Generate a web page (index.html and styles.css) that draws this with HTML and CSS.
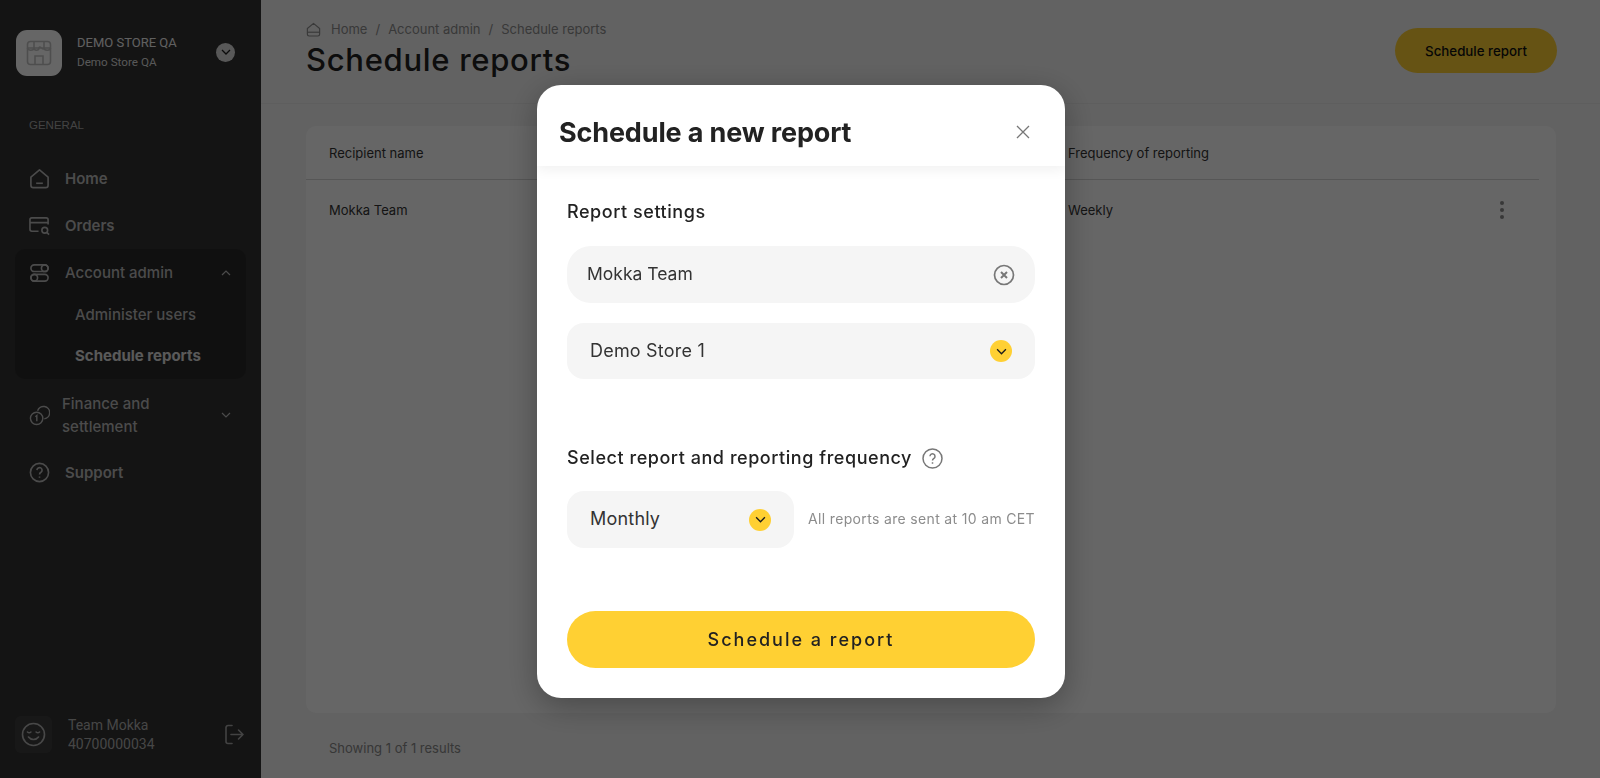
FILE: index.html
```html
<!DOCTYPE html>
<html lang="en">
<head>
    <meta charset="UTF-8">
    <title>Schedule reports</title>
    <link rel="stylesheet" href="styles.css">
</head>
<body>
    <div class="app">
        <aside class="sidebar">
            <div class="store">
                <div class="store-logo">
                    <svg width="28" height="28" viewBox="0 0 28 28" fill="none" stroke="#c4c4c4" stroke-width="1.6">
                        <rect x="2.5" y="2.5" width="23" height="23" rx="3"/>
                        <path d="M2.5 9h23M9 2.5V9c0 3-6.500 3-6.500 0M9 9c0 3 5 3 5 0s5 3 5 0M19 2.500V9c0 3 6.500 3 6.500 0"/>
                        <path d="M10 25.500V17h8v8.500"/>
                    </svg>
                </div>
                <div class="store-text">
                    <div class="store-name">DEMO STORE QA</div>
                    <div class="store-sub">Demo Store QA</div>
                </div>
                <span class="store-toggle">
                    <svg width="10" height="6" viewBox="0 0 10 6" fill="none" stroke="#1c1c1c" stroke-width="1.3"><path d="M1 1l4 4 4-4"/></svg>
                </span>
            </div>

            <div class="nav-title">GENERAL</div>

            <nav class="nav">
                <a class="nav-item">
                    <svg class="nav-icon" viewBox="0 0 22 22" fill="none" stroke="currentColor" stroke-width="1.7">
                        <path d="M2 9.500L11 2l9 7.500V18a2.500 2.500 0 0 1-2.500 2.500h-13A2.500 2.500 0 0 1 2 18z" stroke-linejoin="round"/>
                        <path d="M7.500 16h7"/>
                    </svg>
                    Home
                </a>
                <a class="nav-item">
                    <svg class="nav-icon" viewBox="0 0 22 22" fill="none" stroke="currentColor" stroke-width="1.7">
                        <path d="M10 17H3a2 2 0 0 1-2-2V5a2 2 0 0 1 2-2h15a2 2 0 0 1 2 2v5M1 8h19"/>
                        <circle cx="16.500" cy="16" r="3"/>
                        <path d="M18.700 18.200l2.300 2.300"/>
                    </svg>
                    Orders
                </a>
                <div class="nav-group">
                    <a class="nav-item nav-parent">
                        <svg class="nav-icon" viewBox="0 0 22 22" fill="none" stroke="currentColor" stroke-width="1.7">
                            <rect x="2" y="3" width="18" height="7" rx="3.500"/>
                            <circle cx="16.500" cy="6.500" r="3.500"/>
                            <rect x="2" y="13" width="18" height="7" rx="3.500"/>
                            <circle cx="5.500" cy="16.500" r="3.500"/>
                        </svg>
                        Account admin
                        <svg class="nav-caret" width="10" height="6" viewBox="0 0 10 6" fill="none" stroke="currentColor" stroke-width="1.2"><path d="M1 5l4-4 4 4"/></svg>
                    </a>
                    <a class="nav-sub">Administer users</a>
                    <a class="nav-sub active">Schedule reports</a>
                </div>
                <a class="nav-item nav-finance">
                    <svg class="nav-icon" viewBox="0 0 22 22" fill="none" stroke="currentColor" stroke-width="1.5">
                        <circle cx="8" cy="14" r="6.500"/>
                        <path d="M9 6a6.500 6.500 0 1 1 7 8.500"/>
                        <path d="M6.700 12.300L8.200 11v6"/>
                    </svg>
                    <span>Finance and settlement</span>
                    <svg class="nav-caret" width="10" height="6" viewBox="0 0 10 6" fill="none" stroke="currentColor" stroke-width="1.2"><path d="M1 1l4 4 4-4"/></svg>
                </a>
                <a class="nav-item">
                    <svg class="nav-icon" viewBox="0 0 22 22" fill="none" stroke="currentColor" stroke-width="1.7">
                        <circle cx="11" cy="11" r="9.500"/>
                        <path d="M8.300 8.500a2.700 2.700 0 1 1 4.200 2.300c-1 .6-1.500 1.200-1.500 2.200"/>
                        <path d="M11 15.200v1.300"/>
                    </svg>
                    Support
                </a>
            </nav>

            <div class="user">
                <div class="user-avatar">
                    <svg width="25" height="25" viewBox="0 0 25 25" fill="none" stroke="#b4b4b4" stroke-width="1.6" stroke-linecap="round">
                        <circle cx="12.500" cy="12.500" r="11"/>
                        <path d="M6.500 10c1 .9 2.400.9 3.400 0M15.100 10c1 .9 2.400.9 3.400 0M7.500 15c2.500 3.300 7.500 3.300 10 0"/>
                    </svg>
                </div>
                <div class="user-text">
                    <div>Team Mokka</div>
                    <div>40700000034</div>
                </div>
                <svg class="user-logout" width="21" height="21" viewBox="0 0 21 21" fill="none" stroke="#a8a8a8" stroke-width="1.600" stroke-linecap="round" stroke-linejoin="round">
                    <path d="M8 1.500H4a2 2 0 0 0-2 2v14a2 2 0 0 0 2 2h4M7 10.500h12M14.500 6l4.500 4.500-4.500 4.500"/>
                </svg>
            </div>
        </aside>

        <main class="main">
            <header class="page-head">
                <div>
                    <div class="crumbs">
                        <svg width="15" height="15" viewBox="0 0 22 22" fill="none" stroke="currentColor" stroke-width="1.700">
                            <path d="M2 9.500L11 2l9 7.500V18a2.500 2.500 0 0 1-2.500 2.500h-13A2.500 2.500 0 0 1 2 18z" stroke-linejoin="round"/>
                            <path d="M2 15h18"/>
                        </svg>
                        <span>Home</span><span>/</span><span>Account admin</span><span>/</span><span>Schedule reports</span>
                    </div>
                    <h1>Schedule reports</h1>
                </div>
                <button class="head-button">Schedule report</button>
            </header>

            <div class="content">
                <section class="card">
                    <div class="table-row table-head">
                        <div>Recipient name</div>
                        <div>Frequency of reporting</div>
                    </div>
                    <div class="table-row">
                        <div>Mokka Team</div>
                        <div>Weekly</div>
                        <span class="kebab"><i></i><i></i><i></i></span>
                    </div>
                </section>
                <div class="results">Showing 1 of 1 results</div>
            </div>
        </main>
    </div>

    <div class="overlay"></div>

    <div class="modal">
        <div class="modal-head">
            <h2>Schedule a new report</h2>
            <svg width="14" height="14" viewBox="0 0 14 14" fill="none" stroke="#777" stroke-width="1.300"><path d="M1 1l12 12M13 1L1 13"/></svg>
        </div>
        <div class="modal-body">
            <h3>Report settings</h3>
            <div class="field field-input">
                <span>Mokka Team</span>
                <svg width="22" height="22" viewBox="0 0 22 22" fill="none" stroke="#777" stroke-width="1.700">
                    <circle cx="11" cy="11" r="9.500"/>
                    <path d="M8 8l6 6M14 8l-6 6" stroke-width="2"/>
                </svg>
            </div>
            <div class="field field-select">
                <span>Demo Store 1</span>
                <span class="chevron">
                    <svg width="11" height="7" viewBox="0 0 10 6" fill="none" stroke="#1c1c1c" stroke-width="1.200"><path d="M1 1l4 4 4-4"/></svg>
                </span>
            </div>

            <div class="freq-title">
                <h3>Select report and reporting frequency</h3>
                <svg width="21" height="21" viewBox="0 0 21 21" fill="none" stroke="#777" stroke-width="1.500">
                    <circle cx="10.500" cy="10.500" r="9.500"/>
                    <path d="M8 8.300a2.500 2.500 0 1 1 3.900 2.100c-1 .6-1.400 1.100-1.400 2M10.500 14.300v1.400"/>
                </svg>
            </div>
            <div class="freq-row">
                <div class="field field-select field-small">
                    <span>Monthly</span>
                    <span class="chevron">
                        <svg width="11" height="7" viewBox="0 0 10 6" fill="none" stroke="#1c1c1c" stroke-width="1.200"><path d="M1 1l4 4 4-4"/></svg>
                    </span>
                </div>
                <div class="freq-note">All reports are sent at 10 am CET</div>
            </div>

            <button class="submit">Schedule a report</button>
        </div>
    </div>
</body>
</html>
```

FILE: styles.css
```css
/* Page */
* {
    box-sizing: border-box;
}

body {
    margin: 0;
    height: 778px;
    overflow: hidden;
    font-family: Inter, Roboto, sans-serif;
    background-color: #f5f5f5;
    color: #2a2a2a;
}

.app {
    display: flex;
    height: 778px;
}

/* Sidebar */
.sidebar {
    width: 261px;
    flex-shrink: 0;
    display: flex;
    flex-direction: column;
    background-color: #323232;
    color: #bcbcbc;
    padding: 30px 15px 24px;
}

.store {
    display: flex;
    align-items: center;
    padding-left: 1px;
}

.store-logo {
    width: 46px;
    height: 46px;
    border-radius: 11px;
    background-color: #fff;
    display: flex;
    align-items: center;
    justify-content: center;
}

.store-text {
    margin-left: 15px;
    width: 139px;
    margin-top: -2px;
    color: #f0f0f0;
    font-family: Roboto, sans-serif;
}

.store-name {
    font-size: 13px;
    line-height: 20px;
}

.store-sub {
    font-size: 11.7px;
    line-height: 18px;
    color: #dcdcdc;
}

.store-toggle {
    width: 19px;
    height: 19px;
    margin-top: -2px;
    border-radius: 50%;
    background-color: #dcdcdc;
    display: flex;
    align-items: center;
    justify-content: center;
}

.nav-title {
    margin: 41px 0 0 14px;
    font-family: "Liberation Sans", Arial, sans-serif;
    font-size: 11.500px;
    line-height: 16px;
    color: #a8a8a8;
}

.nav {
    margin-top: 22px;
    display: flex;
    flex-direction: column;
}

.nav-item {
    display: flex;
    align-items: center;
    height: 47px;
    padding-left: 14px;
    font-size: 15px;
    font-weight: 600;
}

.nav-icon {
    width: 21px;
    height: 21px;
    margin-right: 15px;
    flex-shrink: 0;
}

.nav-group {
    background-color: #2a2a2a;
    border-radius: 10px;
    height: 130px;
}

.nav-parent {
    font-weight: 500;
    margin-bottom: -2px;
}

.nav-caret {
    margin-left: auto;
    margin-right: 15px;
}

.nav-sub {
    display: flex;
    align-items: center;
    height: 41px;
    padding-left: 60px;
    font-size: 15px;
    font-weight: 500;
}

.nav-sub.active {
    font-weight: 700;
    color: #e0e0e0;
}

.nav-finance {
    height: 68px;
    margin-top: 2px;
    line-height: 23px;
    font-weight: 500;
}

.nav-finance .nav-icon {
    margin-right: 12px;
}

.nav-finance span {
    width: 130px;
}

.user {
    margin-top: auto;
    display: flex;
    align-items: center;
}

.user-avatar {
    width: 37px;
    height: 37px;
    border-radius: 6px;
    background-color: #3e3e3e;
    display: flex;
    align-items: center;
    justify-content: center;
}

.user-text {
    margin-left: 16px;
    margin-top: 2px;
    font-family: Roboto, sans-serif;
    font-size: 14px;
    line-height: 19px;
    color: #b0b0b0;
}

.user-logout {
    margin-left: auto;
    margin-right: 1px;
}

/* Main area */
.main {
    flex: 1;
    display: flex;
    flex-direction: column;
}

.page-head {
    height: 104px;
    padding: 21px 43px 0 45px;
    display: flex;
    justify-content: space-between;
    align-items: flex-start;
    border-bottom: 1px solid #ebebeb;
}

.crumbs {
    display: flex;
    align-items: center;
    gap: 8px;
    font-size: 13px;
    line-height: 16px;
    color: #8e8e8e;
}

.crumbs svg {
    margin-right: 2px;
}

h1 {
    margin: 4px 0 0;
    font-size: 31px;
    line-height: 38px;
    font-weight: 500;
    letter-spacing: .7px;
    color: #222;
}

.head-button {
    margin-top: 7px;
    width: 162px;
    height: 45px;
    border: none;
    border-radius: 23px;
    background-color: #ffd033;
    font-family: inherit;
    font-size: 13.300px;
    font-weight: 500;
    color: #111;
}

.content {
    padding: 22px 44px 0 45px;
}

.card {
    height: 587px;
    padding: 0 17px 0 23px;
    background-color: #fff;
    border-radius: 10px;
}

.table-row {
    position: relative;
    display: grid;
    grid-template-columns: 739px 1fr;
    font-size: 13px;
    color: #333;
    height: 59px;
    align-items: center;
}

.table-head {
    height: 54px;
    margin-left: -23px;
    padding-left: 23px;
    border-bottom: 1px solid #d6d6d6;
}

.kebab {
    position: absolute;
    right: 35px;
    top: 21px;
    display: flex;
    flex-direction: column;
    gap: 3px;
}

.kebab i {
    width: 4px;
    height: 4px;
    border-radius: 50%;
    background-color: #8c8c8c;
}

.results {
    margin: 27px 0 0 23px;
    font-size: 13px;
    line-height: 16px;
    color: #8a8a8a;
}

/* Dimmer and dialog */
.overlay {
    position: fixed;
    inset: 0;
    background-color: rgba(0, 0, 0, .6);
}

.modal {
    position: fixed;
    left: 537px;
    top: 85px;
    width: 528px;
    height: 613px;
    background-color: #fff;
    border-radius: 24px;
    box-shadow: 0 8px 32px rgba(0, 0, 0, .3);
    overflow: hidden;
}

.modal-head {
    height: 81px;
    padding: 13px 35px 0 22px;
    display: flex;
    align-items: center;
    justify-content: space-between;
    box-shadow: 0 4px 12px rgba(0, 0, 0, .06);
}

h2 {
    margin: 0;
    font-size: 27px;
    font-weight: 700;
    letter-spacing: -.15px;
    color: #222;
}

.modal-body {
    padding: 34px 30px 0;
}

h3 {
    margin: 0;
    font-size: 18px;
    line-height: 24px;
    font-weight: 500;
    letter-spacing: .55px;
    color: #222;
}

.field {
    height: 57px;
    background-color: #f5f5f5;
    display: flex;
    align-items: center;
    justify-content: space-between;
    font-size: 18px;
    letter-spacing: .2px;
    color: #333;
}

.field > span:first-child {
    margin-top: -2px;
}

.field-input {
    margin-top: 22px;
    border-radius: 24px;
    padding: 0 20px;
    font-size: 17.500px;
    letter-spacing: 0;
}

.field-select {
    margin-top: 20px;
    height: 56px;
    border-radius: 17px;
    padding: 0 23px;
}

.chevron {
    width: 22px;
    height: 22px;
    border-radius: 50%;
    background-color: #ffd033;
    display: flex;
    align-items: center;
    justify-content: center;
}

.freq-title {
    margin-top: 67px;
    display: flex;
    align-items: center;
    gap: 10px;
}

.freq-row {
    margin-top: 21px;
    display: flex;
    align-items: center;
    justify-content: space-between;
}

.field-small {
    margin-top: 0;
    width: 227px;
    height: 57px;
}

.freq-note {
    margin-top: -2px;
    font-size: 14px;
    letter-spacing: .34px;
    color: #8c8c8c;
}

.submit {
    margin-top: 63px;
    width: 100%;
    height: 57px;
    padding-bottom: 2px;
    border: none;
    border-radius: 29px;
    background-color: #ffd033;
    font-family: inherit;
    font-size: 18px;
    font-weight: 500;
    letter-spacing: 2px;
    color: #222;
}
```
